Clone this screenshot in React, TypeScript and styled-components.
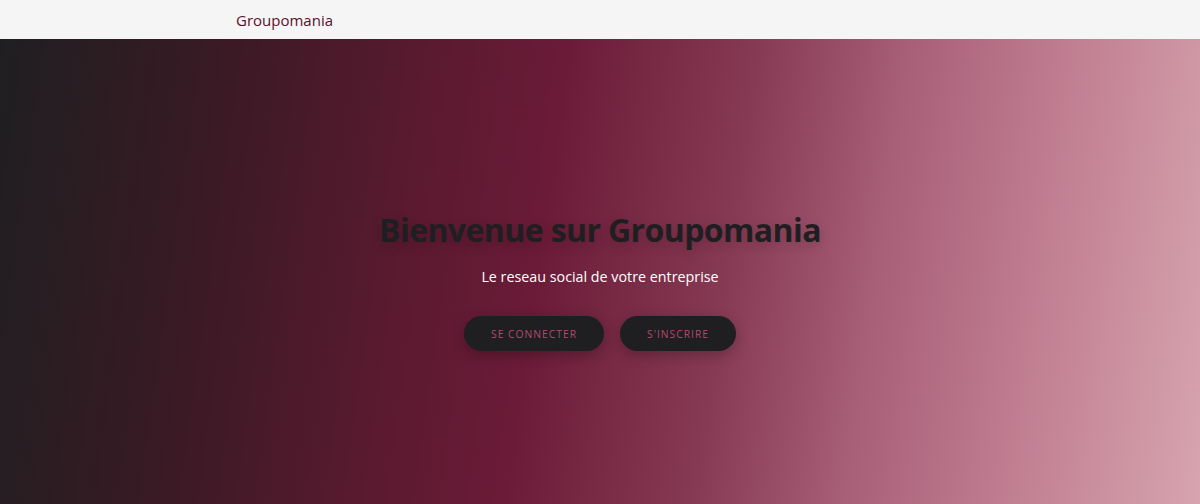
import styled, { createGlobalStyle } from 'styled-components';

const GlobalStyle = createGlobalStyle`
  html, body {
    margin: 0;
    padding: 0;
    height: 100%;
  }
  body {
    font-family: "Open Sans", "Noto Sans", sans-serif;
    background: #f5f5f5;
  }
  #root {
    height: 100%;
  }
`;

const Page = styled.div`
  display: flex;
  flex-direction: column;
  height: 504px;
  overflow: hidden;
`;

const NavBar = styled.header`
  height: 39px;
  flex-shrink: 0;
  display: flex;
  align-items: center;
  padding-left: 236px;
  background: #f5f5f5;
  box-sizing: border-box;
`;

const Brand = styled.a`
  font-size: 15px;
  color: #5c1029;
  text-decoration: none;
`;

const Hero = styled.main`
  flex: 1;
  display: flex;
  flex-direction: column;
  align-items: center;
  justify-content: center;
  padding-top: 16px;
  background: linear-gradient(
    98deg,
    #1f1f21 0%,
    #3a1a24 18%,
    #5a1a30 34%,
    #6b1b37 45%,
    #873a54 60%,
    #a85f78 72%,
    #bf7c90 84%,
    #d7a4af 100%
  );
`;

const Title = styled.h1`
  margin: 0;
  font-size: 32px;
  font-weight: 700;
  letter-spacing: -0.6px;
  color: #1f1f21;
  text-shadow: 0 4px 12px rgba(0, 0, 0, 0.18);
`;

const Subtitle = styled.p`
  margin: 16px 0 0;
  font-size: 14.3px;
  color: #ffffff;
`;

const Actions = styled.div`
  display: flex;
  gap: 16px;
  margin-top: 30px;
`;

const PillButton = styled.button`
  height: 35px;
  padding: 0 27px;
  border: none;
  border-radius: 18px;
  background: #1f1f21;
  color: #b5476e;
  font-family: inherit;
  font-size: 10.3px;
  letter-spacing: 1px;
  text-transform: uppercase;
  cursor: pointer;
  box-shadow: 0 4px 14px rgba(0, 0, 0, 0.25);
`;

export default function App() {
  return (
    <>
      <GlobalStyle />
      <Page>
        <NavBar>
          <Brand href="#">Groupomania</Brand>
        </NavBar>
        <Hero>
          <Title>Bienvenue sur Groupomania</Title>
          <Subtitle>Le reseau social de votre entreprise</Subtitle>
          <Actions>
            <PillButton>Se connecter</PillButton>
            <PillButton>S'inscrire</PillButton>
          </Actions>
        </Hero>
      </Page>
    </>
  );
}
